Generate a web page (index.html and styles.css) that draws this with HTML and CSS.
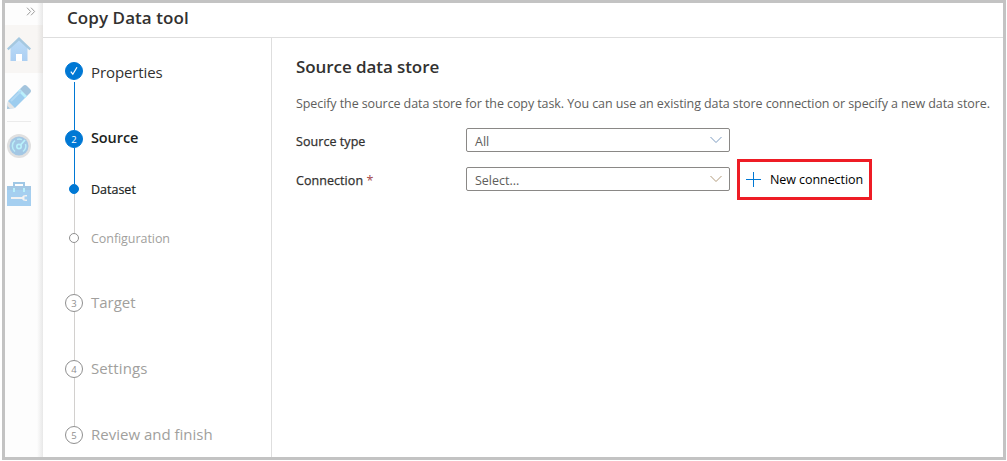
FILE: index.html
```html
<!DOCTYPE html>
<html lang="en">
<head>
<meta charset="utf-8">
<title>Copy Data tool</title>
<link rel="stylesheet" href="styles.css">
</head>
<body>
<div class="frame">
  <nav class="rail">
    <div class="rail-expand">
      <svg width="10" height="9" viewBox="0 0 10 9" fill="none" stroke="#9c9c9c" stroke-width="1"><path d="M1 .7l3.6 3.8L1 8.3M5 .7l3.6 3.8L5 8.3"/></svg>
    </div>
    <div class="rail-item selected">
      <svg width="24" height="24" viewBox="0 0 24 24"><defs><linearGradient id="wall" x2="0" y2="1"><stop stop-color="#bcdcf8"/><stop offset="1" stop-color="#accff2"/></linearGradient></defs><path d="M3.5 10L12 2l8.500 8v14H15v-7H9v7H3.500z" fill="url(#wall)"/><path d="M9 17h6v7H9z" fill="#fff"/><path d="M12 0l12 11.500-1.500 1.800L12 3.500 1.500 13.300 0 11.500z" fill="#a5c8e0"/></svg>
    </div>
    <div class="rail-item">
      <svg width="24" height="24" viewBox="0 0 24 24"><path d="M13 4l7 7L8 23l-8 1 1-8z" fill="#9dcdef"/><path d="M11 6l2-2 7 7-2 2z" fill="#b9f0fb"/><path d="M13 4l3-3q2-2 4 0l3 3q2 2 0 4l-3 3z" fill="#a3c4dd"/><path d="M1 16l7 7-8 1z" fill="#e5e5e5"/><path d="M.5 21l2.500 2.500L0 24z" fill="#a5c8e0"/><path d="M4 16l10-10" stroke="#b1d8f3" stroke-width="2"/></svg>
    </div>
    <div class="rail-item monitor">
      <svg width="24" height="24" viewBox="0 0 24 24" fill="none"><circle cx="12" cy="12" r="12" fill="#e0e0e0"/><circle cx="12" cy="12" r="9.500" fill="#a3c7e4"/><path d="M8 17.500a7 7 0 0 1 0-11M10 5.400a7 7 0 0 1 5 .2M18.500 10a7 7 0 0 1-2.500 7.500" stroke="#b9edf8" stroke-width="1.500"/><circle cx="12" cy="12.500" r="2.200" stroke="#b9f1fb" stroke-width="1.700"/><path d="M13.500 11L18 6" stroke="#b9f1fb" stroke-width="1.800"/></svg>
    </div>
    <div class="rail-item">
      <svg width="24" height="24" viewBox="0 0 24 24"><path d="M7 5V1h10v4" fill="none" stroke="#9fc7e5" stroke-width="2"/><path d="M0 4h24v20H0z" fill="#a5cff0"/><path d="M0 4h24v4H0z" fill="#a3c7e4"/><path d="M6 6h2v4H6zM16 6h2v4h-2z" fill="#b9f0fb"/><path d="M4 15h11q1-2.500 5-2v1.500h-2.500v3H20V19q-4 .5-5-2H4z" fill="#f2f2f2"/></svg>
    </div>
  </nav>
  <div class="content">
    <header class="titlebar"><h1 class="title">Copy Data tool</h1></header>
    <div class="body">
      <ol class="steps">
        <li class="step properties"><span class="track"><span class="circle done"><svg width="8" height="10" viewBox="0 0 8 10" fill="none" stroke="#fff" stroke-width="1.200"><path d="M.8 5.600l2 2.600L7 1.200"/></svg></span><span class="line active"></span></span><span class="label">Properties</span></li>
        <li class="step source"><span class="track"><span class="circle done number">2</span><span class="line active"></span></span><span class="label">Source</span></li>
        <li class="step sub dataset"><span class="track"><span class="dot filled"></span><span class="line"></span></span><span class="label">Dataset</span></li>
        <li class="step sub configuration pending"><span class="track"><span class="dot"></span><span class="line"></span></span><span class="label">Configuration</span></li>
        <li class="step target pending"><span class="track"><span class="circle number">3</span><span class="line"></span></span><span class="label">Target</span></li>
        <li class="step settings pending"><span class="track"><span class="circle number">4</span><span class="line"></span></span><span class="label">Settings</span></li>
        <li class="step review pending"><span class="track"><span class="circle number">5</span></span><span class="label">Review and finish</span></li>
      </ol>
      <main class="form">
        <h2 class="heading">Source data store</h2>
        <p class="description">Specify the source data store for the copy task. You can use an existing data store connection or specify a new data store.</p>
        <div class="row">
          <span class="field-label">Source type</span>
          <div class="select"><span>All</span><svg width="12" height="8" viewBox="0 0 12 8" fill="none" stroke="#7c9bc0"><path d="M.5 1L6 6.500 11.500 1"/></svg></div>
        </div>
        <div class="row">
          <span class="field-label">Connection <span class="required">*</span></span>
          <div class="select"><span>Select...</span><svg width="12" height="8" viewBox="0 0 12 8" fill="none" stroke="#b19a7b"><path d="M.5 1L6 6.500 11.500 1"/></svg></div>
          <div class="new-connection"><svg width="15" height="15" viewBox="0 0 15 15" stroke="#0078d4"><path d="M7.500 0v15M0 7.500h15"/></svg><span>New connection</span></div>
        </div>
      </main>
    </div>
  </div>
</div>
</body>
</html>
```
FILE: styles.css
```css
* { box-sizing: border-box; }
body { margin: 0; background: #fff; font-family: "Open Sans", "Noto Sans", sans-serif; color: #323130; }
svg { display: block; flex: none; }
.frame { display: flex; width: 1004px; height: 460px; margin-left: 2px; border: 3px solid #c3c3c3; }
.rail { flex: none; width: 38px; background: linear-gradient(90deg, #fdfdfd 32px, #e8e8e8 38px); }
.rail-expand { height: 22px; padding: 4px 0 0 21px; }
.rail-item { height: 48px; padding: 12px 0 0 2px; }
.rail-item.selected { background: linear-gradient(90deg, #f8f6f4 32px, #e5e3e1 38px); }
.monitor { height: 49px; padding-top: 13px; position: relative; }
.monitor::before { content: ""; position: absolute; left: 2px; top: 0; width: 24px; height: 1px; background: #ebebeb; }
.content { flex: 1; min-width: 0; display: flex; flex-direction: column; }
.titlebar { height: 35px; padding: 3px 0 0 24px; border-bottom: 1px solid #dedede; }
.title, .heading { margin: 0; font-size: 17px; line-height: 24px; font-weight: 600; white-space: nowrap; letter-spacing: -.08px; }
.title { letter-spacing: .07px; }
.body { flex: 1; display: flex; min-height: 0; }
.steps { flex: none; width: 229px; margin: 0; padding: 24px 0 0 22px; list-style: none; border-right: 1px solid #dedede; }
.step { display: flex; gap: 8px; height: 66px; }
.track { width: 18px; display: flex; flex-direction: column; align-items: center; }
.circle { flex: none; width: 18px; height: 18px; border: 1px solid #8f8f8f; border-radius: 50%; display: flex; align-items: center; justify-content: center; font-size: 9.500px; line-height: 16px; color: #8f8f8f; }
.circle.number { padding-top: 1px; }
.circle.done { background: #0078d4; border-color: #0078d4; color: #fff; }
.line { flex: 1; width: 1px; margin-left: 1px; background: #d2d0ce; }
.line.active { background: #0078d4; }
.label { height: 20px; line-height: 20px; margin-top: -2px; font-size: 15px; white-space: nowrap; }
.properties { height: 68px; }
.properties .label { margin-top: 0; letter-spacing: -.1px; }
.properties .line { margin-top: 2px; }
.source { height: 54px; }
.source .label { font-weight: 600; font-size: 14.500px; letter-spacing: -.1px; color: #201f1e; }
.sub .label { font-size: 12.500px; margin-top: -4px; }
.dataset { height: 49px; }
.dataset .label { color: #201f1e; -webkit-text-stroke: .2px #201f1e; }
.configuration { height: 61px; }
.configuration .label { letter-spacing: -.06px; }
.settings .label { letter-spacing: .1px; }
.review { height: 18px; }
.dot { flex: none; width: 10px; height: 10px; border: 1px solid #8f8f8f; border-radius: 50%; }
.dot.filled { background: #0078d4; border-color: #0078d4; }
.pending .label { color: #a19f9d; }
.form { flex: 1; min-width: 0; padding: 17px 0 0 24px; }
.description { margin: 15px 0 14px; font-size: 12.500px; line-height: 20px; letter-spacing: -.087px; color: #605e5c; white-space: nowrap; }
.row { display: flex; align-items: center; height: 24px; margin-bottom: 15px; font-size: 12.500px; }
.field-label { width: 170px; white-space: nowrap; padding-top: 2px; letter-spacing: .06px; -webkit-text-stroke: .25px; }
.required { color: #a4474a; -webkit-text-stroke: 0; }
.select { width: 264px; height: 24px; padding: 2px 7px 0 8px; border: 1px solid #8a8886; border-radius: 2px; display: flex; align-items: center; justify-content: space-between; color: #605e5c; }
.select svg { margin-top: -2px; }
.new-connection { width: 135px; height: 41px; flex: none; margin: 1px 0 0 7px; padding-left: 6px; border: 3px solid #ee1c25; display: flex; align-items: center; gap: 9px; color: #000; white-space: nowrap; letter-spacing: -.07px; }
```
